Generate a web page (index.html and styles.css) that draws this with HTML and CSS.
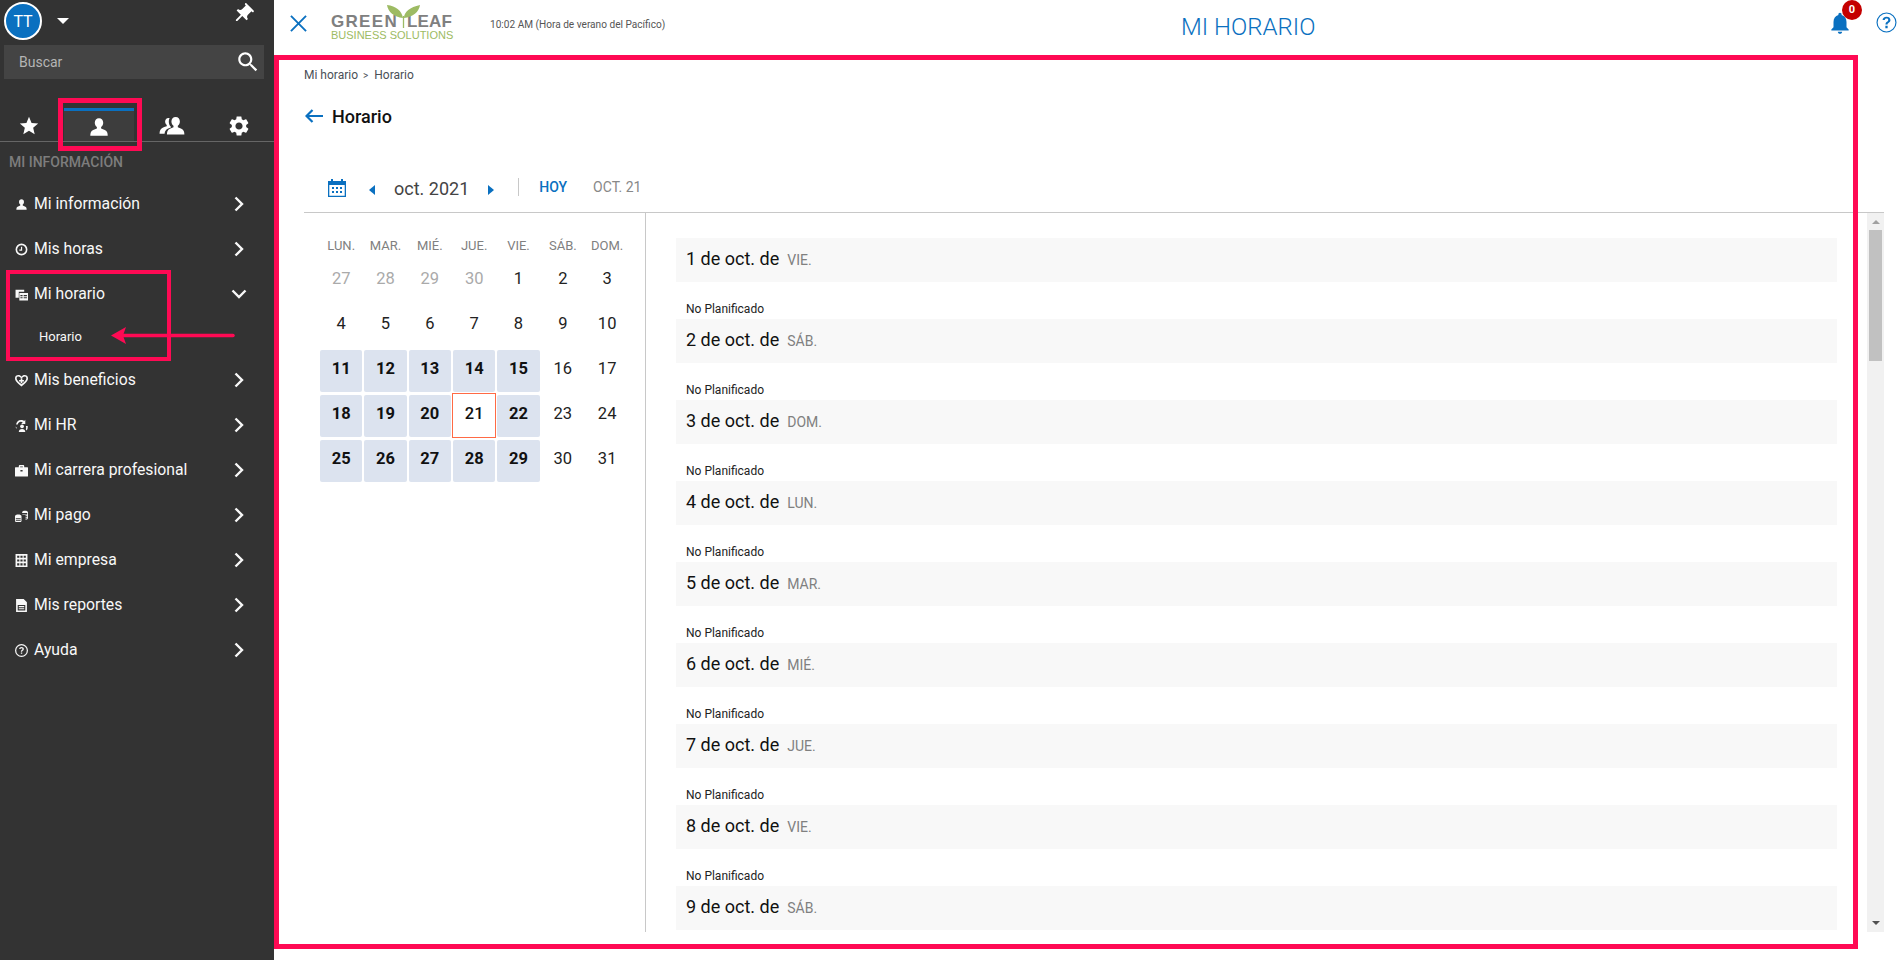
FILE: index.html
```html
<!DOCTYPE html>
<html lang="es">
<head>
<meta charset="utf-8">
<title>Mi horario</title>
<link rel="stylesheet" href="styles.css">
</head>
<body>
<svg class="defs" aria-hidden="true">
  <symbol id="i-star" viewBox="0 0 24 24"><path d="M12 17.27L18.18 21l-1.64-7.03L22 9.24l-7.19-.61L12 2 9.19 8.63 2 9.24l5.46 4.73L5.82 21z"/></symbol>
  <symbol id="i-person" viewBox="0 0 24 24"><path d="M12 2.5c-2.8 0-4.6 2-4.6 4.8 0 2 .9 3.8 2.3 4.8v1.600c-2.600.9-6 2-6.700 4.300-.3 1-.5 2.200-.5 3.500h19c0-1.300-.2-2.500-.5-3.500-.7-2.300-4.100-3.400-6.700-4.300v-1.600c1.400-1 2.300-2.800 2.300-4.800 0-2.800-1.800-4.800-4.600-4.800z"/></symbol>
  <symbol id="i-people" viewBox="0 0 30 24"><path d="M10.500 3C8.300 3 6.800 4.700 6.800 7c0 1.600.7 3.100 1.800 3.900v1.400C6 13.200 2.800 14 1.600 16.200.9 17.500.6 19 .6 20.500h5.600c.2-2.900 1.800-4.500 4-5.600 1-.5 2.100-1 3-1.300V12.800c-1.500-1.500-2.400-3.700-2.300-5.900 0-1.300.3-2.600.9-3.700-.4-.1-.9-.2-1.300-.2z"/><path d="M18.500 2c-2.900 0-4.700 2.100-4.700 4.900 0 2.100.9 3.900 2.300 4.900v1.700c-2.600.9-5.800 1.900-6.700 4.200-.4 1.100-.6 2.300-.6 3.800h19.400c0-1.500-.2-2.700-.6-3.800-.9-2.300-4.100-3.300-6.700-4.200v-1.700c1.400-1 2.300-2.800 2.300-4.900C23.200 4.100 21.400 2 18.500 2z"/></symbol>
  <symbol id="i-gear" viewBox="0 0 24 24"><path d="M19.140 12.940c.04-.3.06-.61.06-.94 0-.32-.02-.64-.07-.94l2.030-1.580c.18-.14.23-.41.12-.61l-1.920-3.320c-.12-.22-.37-.29-.59-.22l-2.390.96c-.5-.38-1.030-.7-1.620-.94l-.36-2.540c-.04-.24-.24-.41-.48-.41h-3.840c-.24 0-.43.17-.47.41l-.36 2.540c-.59.24-1.130.57-1.620.94l-2.390-.96c-.22-.08-.47 0-.59.22L2.740 8.870c-.12.21-.08.47.12.61l2.030 1.580c-.05.3-.09.63-.09.94s.02.64.07.94l-2.030 1.580c-.18.14-.23.41-.12.61l1.920 3.320c.12.22.37.29.59.22l2.390-.96c.5.38 1.030.7 1.620.94l.36 2.540c.05.24.24.41.48.41h3.840c.24 0 .44-.17.47-.41l.36-2.540c.59-.24 1.130-.56 1.620-.94l2.390.96c.22.08.47 0 .59-.22l1.920-3.320c.12-.22.07-.47-.12-.61l-2.010-1.580zM12 15.600c-1.980 0-3.600-1.620-3.600-3.600s1.620-3.600 3.600-3.600 3.600 1.620 3.600 3.600-1.620 3.600-3.600 3.600z"/></symbol>
  <symbol id="i-search" viewBox="0 0 24 24"><path d="M15.500 14h-.79l-.28-.27C15.410 12.590 16 11.110 16 9.500 16 5.910 13.090 3 9.500 3S3 5.910 3 9.500 5.910 16 9.500 16c1.610 0 3.090-.59 4.230-1.570l.27.28v.79l5 4.990L20.490 19l-4.990-5zm-6 0C7.010 14 5 11.990 5 9.500S7.010 5 9.500 5 14 7.010 14 9.500 11.990 14 9.500 14z"/></symbol>
  <symbol id="i-pin" viewBox="0 0 24 24"><path transform="rotate(45 12 12)" d="M16 9V4h1c.55 0 1-.45 1-1s-.45-1-1-1H7c-.55 0-1 .45-1 1s.45 1 1 1h1v5c0 1.660-1.340 3-3 3v2h5.970v7l1 1 1-1v-7H19v-2c-1.660 0-3-1.340-3-3z"/></symbol>
  <symbol id="i-bell" viewBox="0 0 24 24"><path d="M12 22c1.100 0 2-.9 2-2h-4c0 1.100.89 2 2 2zm6-6v-5c0-3.070-1.640-5.640-4.500-6.320V4c0-.83-.67-1.500-1.500-1.500s-1.500.67-1.500 1.500v.68C7.630 5.360 6 7.920 6 11v5l-2 2v1h16v-1l-2-2z"/></symbol>
  <symbol id="i-clock" viewBox="0 0 24 24"><path d="M12 1a11 11 0 1 0 0 22 11 11 0 0 0 0-22zm0 3a8 8 0 1 1 0 16 8 8 0 0 1 0-16z"/><path d="M11 7h2.200v7.200H8v-2.200h3z"/></symbol>
  <symbol id="i-sched" viewBox="0 0 24 24"><path d="M1 3h16v4H7v11H1z"/><path d="M8 9h16v14H8zm2 4v2h4v-2zm6 0v2h6v-2zm-6 4v2h4v-2zm6 0v2h6v-2z" fill-rule="evenodd"/></symbol>
  <symbol id="i-heart" viewBox="0 0 24 24"><path fill-rule="evenodd" d="M12 23C6 18 0 14 0 8 0 4 3 2 6.200 2 8.700 2 10.800 3.200 12 5.200 13.200 3.200 15.300 2 17.800 2 21 2 24 4 24 8c0 6-6 10-12 15zm0-4c4.600-3.800 9-7 9-11 0-2.200-1.500-3.200-3.200-3.200-2 0-3.800 1.400-5.800 4-2-2.600-3.800-4-5.800-4C4.500 4.800 3 5.800 3 8c0 4 4.400 7.200 9 11zM10.500 8h3v3h3v3h-3v3h-3v-3h-3v-3h3z"/></symbol>
  <symbol id="i-hr" viewBox="0 0 24 24"><path d="M2 10a9.500 9.500 0 0 1 15-6.500L19 1.500V9h-7.500l2.800-2.800A6 6 0 0 0 5 10z"/><circle cx="13" cy="13.500" r="3.500"/><path d="M7 24c0-3.500 2.500-5.500 6-5.500s6 2 6 5.500zM20 13h3.500v2a9 9 0 0 1-2 6l-1.500-2.200a7 7 0 0 0 0-5.800zM1 14l3 3h-2z"/></symbol>
  <symbol id="i-case" viewBox="0 0 24 24"><path fill-rule="evenodd" d="M7 6V3.500C7 2.700 7.700 2 8.500 2h7c.8 0 1.500.7 1.500 1.500V6h6c.6 0 1 .4 1 1v15c0 .6-.4 1-1 1H1c-.6 0-1-.4-1-1V7c0-.6.4-1 1-1zm2.500 0h5V4.500h-5zM10 11v3h4v-3z"/></symbol>
  <symbol id="i-pay" viewBox="0 0 24 24"><path fill-rule="evenodd" d="M13 6c0-1.800 2.400-3 5.500-3S24 4.200 24 6v11c0 1.400-1.800 2.500-4.500 2.800V17.500h3V16h-3v-1.500h3V13h-3v-1.500h3V10h-9V9h9V7.500h-9zM0 13c0-1.800 2.800-3 6-3s6 1.200 6 3v9c0 1.800-2.800 3-6 3s-6-1.200-6-3zm1.500 3.500V18h9v-1.500zm0 3.500v1.500h9V20z"/></symbol>
  <symbol id="i-company" viewBox="0 0 24 24"><path fill-rule="evenodd" d="M1 0h22v24H1zm3 3v4h4V3zm6 0v4h4V3zm6 0v4h4V3zM4 10v4h4v-4zm6 0v4h4v-4zm6 0v4h4v-4zM4 17v4h4v-4zm6 0v4h4v-4zm6 0v4h4v-4z"/></symbol>
  <symbol id="i-report" viewBox="0 0 24 24"><path fill-rule="evenodd" d="M2 0h14l6 6v18H2zm3 11v10h14V11zm2 2h10v2H7zm0 4h10v2H7z"/></symbol>
  <symbol id="i-help" viewBox="0 0 24 24"><path fill-rule="evenodd" d="M12 0a12 12 0 1 0 0 24 12 12 0 0 0 0-24zm0 2.300a9.700 9.700 0 1 1 0 19.400 9.700 9.700 0 0 1 0-19.400zM10.800 15.500h2.500v2.700h-2.500zM12 5.500c-2.500 0-4.300 1.400-4.300 3.800h2.400c0-1 .7-1.600 1.900-1.600s1.900.6 1.900 1.500c0 1-.7 1.400-1.500 2-1.100.8-1.600 1.500-1.600 3h2.300c0-.9.400-1.300 1.200-1.900 1.100-.8 2-1.600 2-3.200 0-2.300-1.900-3.600-4.300-3.600z"/></symbol>
  <symbol id="i-help-top" viewBox="0 0 24 24"><circle cx="12" cy="12" r="10.800" fill="none" stroke="currentColor" stroke-width="1.300"/><path fill-rule="evenodd" d="M10.700 15.800h2.600v2.700h-2.600zM12 5.300c-2.600 0-4.500 1.500-4.500 3.900h2.500c0-1 .8-1.700 2-1.700s2 .6 2 1.600c0 1-.7 1.400-1.500 2-1.200.8-1.700 1.600-1.700 3.300h2.400c0-1 .4-1.400 1.300-2.100 1.100-.8 2-1.700 2-3.300 0-2.300-2-3.700-4.500-3.700z"/></symbol>
  <symbol id="i-chev" viewBox="0 0 10 16"><path d="M1.500 1.500L8 8l-6.500 6.500" fill="none" stroke="currentColor" stroke-width="2.400"/></symbol>
  <symbol id="i-cal" viewBox="0 0 18 18"><path fill-rule="evenodd" d="M0 2h3V0h2v2h8V0h2v2h3v16H0zm1.300 4v10.700h15.400V6zM4 8h2v2H4zm4 0h2v2H8zm4 0h2v2h-2zM4 12h2v2H4zm4 0h2v2H8zm4 0h2v2h-2z"/></symbol>
</svg>

<aside class="sidebar">
  <div class="user-row">
    <div class="avatar">TT</div>
    <span class="caret"></span>
    <svg class="pin"><use href="#i-pin"/></svg>
  </div>
  <div class="search">
    <span>Buscar</span>
    <svg class="search-icon"><use href="#i-search"/></svg>
  </div>
  <div class="tabs">
    <div class="tab tab-star"><svg class="ti-star"><use href="#i-star"/></svg></div>
    <div class="tab tab-me"><svg class="ti-me"><use href="#i-person"/></svg></div>
    <div class="tab tab-team"><svg class="ti-team"><use href="#i-people"/></svg></div>
    <div class="tab tab-gear"><svg class="ti-gear"><use href="#i-gear"/></svg></div>
  </div>
  <div class="section-label">MI INFORMACIÓN</div>
  <nav class="nav">
    <a class="nav-item"><svg class="ni"><use href="#i-person"/></svg><span>Mi información</span><svg class="chev"><use href="#i-chev"/></svg></a>
    <a class="nav-item"><svg class="ni"><use href="#i-clock"/></svg><span>Mis horas</span><svg class="chev"><use href="#i-chev"/></svg></a>
    <a class="nav-item"><svg class="ni"><use href="#i-sched"/></svg><span>Mi horario</span><svg class="chev chev-open"><use href="#i-chev"/></svg></a>
    <a class="nav-sub">Horario</a>
    <a class="nav-item"><svg class="ni"><use href="#i-heart"/></svg><span>Mis beneficios</span><svg class="chev"><use href="#i-chev"/></svg></a>
    <a class="nav-item"><svg class="ni"><use href="#i-hr"/></svg><span>Mi HR</span><svg class="chev"><use href="#i-chev"/></svg></a>
    <a class="nav-item"><svg class="ni"><use href="#i-case"/></svg><span>Mi carrera profesional</span><svg class="chev"><use href="#i-chev"/></svg></a>
    <a class="nav-item"><svg class="ni"><use href="#i-pay"/></svg><span>Mi pago</span><svg class="chev"><use href="#i-chev"/></svg></a>
    <a class="nav-item"><svg class="ni"><use href="#i-company"/></svg><span>Mi empresa</span><svg class="chev"><use href="#i-chev"/></svg></a>
    <a class="nav-item"><svg class="ni"><use href="#i-report"/></svg><span>Mis reportes</span><svg class="chev"><use href="#i-chev"/></svg></a>
    <a class="nav-item"><svg class="ni"><use href="#i-help"/></svg><span>Ayuda</span><svg class="chev"><use href="#i-chev"/></svg></a>
  </nav>
</aside>

<main class="main">
  <header class="topbar">
    <svg class="close" viewBox="0 0 18 18"><path d="M1 1l16 16M17 1L1 17" fill="none" stroke="currentColor" stroke-width="2"/></svg>
    <div class="logo">
      <svg class="leaf" viewBox="0 0 33 23"><path d="M16 13C15 6 9 1 0 0c1 7 7 12 16 13zM17 13c0-6 6-11 16-13-1 7-7 12-16 13z" fill="#9dbb63"/><path d="M16.500 11v12" stroke="#9dbb63" stroke-width="1.300" fill="none"/></svg>
      <div class="logo-top"><span class="logo-green">GREEN</span><span class="logo-leaf">LEAF</span></div>
      <div class="logo-bottom">BUSINESS SOLUTIONS</div>
    </div>
    <div class="clock">10:02 AM (Hora de verano del Pacífico)</div>
    <h1 class="title">MI HORARIO</h1>
    <div class="top-actions">
      <div class="bell"><svg class="bell-icon"><use href="#i-bell"/></svg><span class="badge">0</span></div>
      <svg class="help"><use href="#i-help-top"/></svg>
    </div>
  </header>

  <section class="content">
    <div class="crumbs">Mi horario<span class="sep">&gt;</span>Horario</div>
    <div class="page-head">
      <svg class="back" viewBox="0 0 18 14"><path d="M18 7H2M7.500 1L1.500 7l6 6" fill="none" stroke="currentColor" stroke-width="2.200"/></svg>
      <h2>Horario</h2>
    </div>
    <div class="cal-bar">
      <svg class="cal-icon"><use href="#i-cal"/></svg>
      <span class="tri tri-l"></span>
      <span class="month">oct. 2021</span>
      <span class="tri tri-r"></span>
      <span class="bar-sep"></span>
      <span class="today">HOY</span>
      <span class="today-date">OCT. 21</span>
    </div>
    <div class="split">
      <div class="cal-pane">
        <div class="cal-grid">
          <div class="dow">LUN.</div><div class="dow">MAR.</div><div class="dow">MIÉ.</div><div class="dow">JUE.</div><div class="dow">VIE.</div><div class="dow">SÁB.</div><div class="dow">DOM.</div>
          <div class="d muted">27</div><div class="d muted">28</div><div class="d muted">29</div><div class="d muted">30</div><div class="d">1</div><div class="d">2</div><div class="d">3</div>
          <div class="d">4</div><div class="d">5</div><div class="d">6</div><div class="d">7</div><div class="d">8</div><div class="d">9</div><div class="d">10</div>
          <div class="d on">11</div><div class="d on">12</div><div class="d on">13</div><div class="d on">14</div><div class="d on">15</div><div class="d">16</div><div class="d">17</div>
          <div class="d on">18</div><div class="d on">19</div><div class="d on">20</div><div class="d now">21</div><div class="d on">22</div><div class="d">23</div><div class="d">24</div>
          <div class="d on">25</div><div class="d on">26</div><div class="d on">27</div><div class="d on">28</div><div class="d on">29</div><div class="d">30</div><div class="d">31</div>
        </div>
      </div>
      <div class="list">
        <div class="day"><div class="row"><b>1 de oct. de</b><em>VIE.</em></div></div>
        <div class="day"><div class="status">No Planificado</div><div class="row"><b>2 de oct. de</b><em>SÁB.</em></div></div>
        <div class="day"><div class="status">No Planificado</div><div class="row"><b>3 de oct. de</b><em>DOM.</em></div></div>
        <div class="day"><div class="status">No Planificado</div><div class="row"><b>4 de oct. de</b><em>LUN.</em></div></div>
        <div class="day"><div class="status">No Planificado</div><div class="row"><b>5 de oct. de</b><em>MAR.</em></div></div>
        <div class="day"><div class="status">No Planificado</div><div class="row"><b>6 de oct. de</b><em>MIÉ.</em></div></div>
        <div class="day"><div class="status">No Planificado</div><div class="row"><b>7 de oct. de</b><em>JUE.</em></div></div>
        <div class="day"><div class="status">No Planificado</div><div class="row"><b>8 de oct. de</b><em>VIE.</em></div></div>
        <div class="day"><div class="status">No Planificado</div><div class="row"><b>9 de oct. de</b><em>SÁB.</em></div></div>
      </div>
      <div class="scrollbar">
        <span class="sb-up"></span>
        <div class="sb-track"><div class="sb-thumb"></div></div>
        <span class="sb-down"></span>
      </div>
    </div>
  </section>
</main>

<div class="mark mark-tab"></div>
<div class="mark mark-menu"></div>
<div class="mark mark-content"></div>
<svg class="mark-arrow" viewBox="0 0 124 20"><path d="M122 9.500H10" fill="none" stroke="#ff0a54" stroke-width="3.500" stroke-linecap="round"/><path d="M0 9.500L15 1l-3 8.500 3 8.500z" fill="#ff0a54"/></svg>
</body>
</html>
```
FILE: styles.css
```css
* { box-sizing: border-box; }
html, body { margin: 0; height: 100%; }
body {
  display: flex;
  width: 1903px;
  height: 960px;
  overflow: hidden;
  background: #fff;
  font-family: Roboto, "Liberation Sans", sans-serif;
  color: #222;
}
.defs { display: none; }
svg { fill: currentColor; display: block; }

/* sidebar */
.sidebar { width: 274px; flex: none; background: #333; color: #fff; position: relative; }
.user-row { height: 45px; display: flex; align-items: flex-start; padding: 2px 0 0 4px; }
.avatar {
  width: 38px; height: 38px; border-radius: 50%;
  background: #0a70c0; border: 2px solid #fff;
  display: flex; align-items: center; justify-content: center;
  font-size: 16px; color: #fff;
}
.caret { width: 0; height: 0; margin: 16px 0 0 15px; border: 6px solid transparent; border-top: 6px solid #fff; border-bottom: 0; }
.pin { width: 24px; height: 24px; margin-left: auto; margin-right: 19px; }
.search {
  margin: 0 10px 0 4px; height: 34px; background: #444;
  display: flex; align-items: center; justify-content: space-between;
  padding: 0 3px 0 15px; font-size: 14px; color: #b5b5b5;
}
.search-icon { width: 26px; height: 26px; color: #fff; }
.tabs { height: 63px; position: relative; border-bottom: 1px solid #666; display: flex; align-items: flex-end; }
.tab { display: flex; align-items: center; justify-content: center; height: 33px; }
.tab-star { width: 64px; padding: 2px 6px 0 0; }
.tab-me { width: 70px; background: #3d3d3d; border-top: 3px solid #0a70c0; padding-top: 1px; }
.tab-team { width: 76px; padding-top: 2px; }
.tab-gear { width: 58px; padding-top: 2px; }
.ti-star { width: 22px; height: 22px; }
.ti-me { width: 22px; height: 22px; }
.ti-team { width: 27px; height: 22px; }
.ti-gear { width: 24px; height: 24px; }
.section-label { padding: 12px 0 0 9px; font-size: 14px; line-height: 16px; color: #7d7d7d; font-weight: 500; }
.nav { padding-top: 11px; }
.nav-item { height: 45px; display: flex; align-items: center; padding-left: 15px; font-size: 15.750px; color: #f8f8f8; }
.ni { width: 13px; height: 13px; margin-right: 6px; flex: none; margin-top: 2px; }
.chev { width: 10px; height: 16px; margin-left: auto; margin-right: 30px; flex: none; }
.chev-open { transform: rotate(90deg); }
.nav-sub { display: block; height: 41px; line-height: 42px; padding-left: 39px; font-size: 13px; color: #f8f8f8; }

/* main */
.main { flex: 1; min-width: 0; display: flex; flex-direction: column; }
.topbar { height: 55px; flex: none; position: relative; display: flex; align-items: center; padding-left: 16px; }
.close { width: 17px; height: 17px; color: #0a70c0; flex: none; margin-bottom: 9px; }
.logo { width: 122px; margin-left: 24px; flex: none; position: relative; padding-top: 13px; height: 47px; margin-bottom: 8px; }
.leaf { position: absolute; left: 56px; top: 5px; width: 33px; height: 23px; }
.logo-top { font-family: "Liberation Sans", sans-serif; font-weight: 700; font-size: 17px; line-height: 17px; color: #7f8080; display: flex; }
.logo-green { letter-spacing: 1.300px; width: 76px; }
.logo-leaf { letter-spacing: .2px; }
.logo-bottom { font-family: "Liberation Sans", sans-serif; font-size: 11px; line-height: 11px; color: #9dbb63; white-space: nowrap; }
.clock { margin-left: 37px; font-size: 10.100px; color: #555; margin-bottom: 7px; white-space: nowrap; }
.title {
  position: absolute; left: 907px; top: 14px; width: 134px; margin: 0;
  font-size: 24px; line-height: 27px; font-weight: 300; color: #0a70c0; white-space: nowrap; text-align: center;
}
.top-actions { position: absolute; top: 0; right: 0; }
.bell { position: absolute; left: -76px; top: 10px; width: 24px; height: 28px; }
.bell-icon { width: 26px; height: 26px; color: #0a70c0; }
.badge {
  position: absolute; left: 15px; top: -10px; width: 20px; height: 20px; border-radius: 50%;
  background: #c40000; color: #fff; font-size: 11px; font-weight: 700; line-height: 20px; text-align: center;
}
.help { position: absolute; left: -27px; top: 12px; width: 21px; height: 21px; color: #0a70c0; }

.content { flex: 1; min-height: 0; padding: 11px 19px 0 30px; display: flex; flex-direction: column; }
.crumbs { height: 18px; flex: none; font-size: 12px; line-height: 18px; color: #4a4f57; }
.sep { margin: 0 6px 0 5px; font-size: 10px; }
.page-head { display: flex; align-items: center; height: 26px; margin-top: 19px; }
.back { width: 18px; height: 14px; color: #0a70c0; margin-left: 1px; }
.page-head h2 { margin: 0 0 0 9px; font-size: 18px; font-weight: 500; color: #111; }
.cal-bar { display: flex; align-items: center; height: 34px; margin-top: 41px; position: relative; padding-left: 24px; }
.cal-icon { width: 18px; height: 18px; color: #0a70c0; margin-top: 2px; }
.tri { width: 0; height: 0; border-top: 5px solid transparent; border-bottom: 5px solid transparent; }
.tri-l { border-right: 6px solid #0a70c0; margin: 5px 0 0 23px; }
.tri-r { border-left: 6px solid #0a70c0; margin: 5px 0 0 19px; }
.month { font-size: 18px; margin-left: 19px; color: #444; margin-top: 2px; }
.bar-sep { width: 1px; height: 18px; background: #c8c8c8; margin-left: 24px; }
.today { font-size: 14px; font-weight: 500; color: #0a70c0; margin-left: 20px; }
.today-date { font-size: 14px; color: #888; margin-left: 26px; }

.split { height: 720px; display: flex; border-top: 1px solid #c8c8c8; margin-top: 8px; }
.cal-pane { width: 342px; flex: none; border-right: 1px solid #c8c8c8; padding: 20px 0 0 15px; }
.cal-grid { display: grid; grid-template-columns: repeat(7, 44.330px); grid-template-rows: 25px repeat(5, 45px); }
.dow { font-size: 13px; color: #808080; text-align: center; align-self: center; }
.d { display: flex; align-items: center; justify-content: center; font-size: 16.500px; margin: 1.500px 1px; padding-bottom: 5px; color: #222; border-radius: 2px; }
.muted { color: #aaa; }
.on { background: #dce3ef; font-weight: 700; color: #111; }
.now { margin: 0; border: 1px solid #ff6a45; border-radius: 0; font-weight: 500; color: #111; }

.list { width: 1221px; flex: none; overflow: hidden; padding: 0 0 0 30px; }
.day { width: 1161px; height: 81px; display: flex; flex-direction: column; justify-content: flex-end; }
.day:first-child { height: 69px; }
.status { font-size: 12px; line-height: 15px; padding-left: 10px; color: #222; margin-bottom: 2px; }
.row { height: 44px; flex: none; background: #f8f8f8; display: flex; align-items: center; padding: 0 0 3px 10px; }
.row b { font-weight: 400; font-size: 18px; color: #111; }
.row em { font-style: normal; font-size: 14px; color: #808080; margin-left: 8px; margin-top: 3px; }

.scrollbar { width: 17px; flex: none; background: #f1f1f1; display: flex; flex-direction: column; align-items: center; }
.sb-up { width: 0; height: 0; margin: 7px 0 5px; border: 4px solid transparent; border-top: 0; border-bottom: 4px solid #a0a0a0; }
.sb-track { flex: 1; width: 100%; padding: 1px 2px 0; }
.sb-thumb { height: 131px; background: #c1c1c1; }
.sb-down { width: 0; height: 0; margin: 5px 0 7px; border: 4px solid transparent; border-bottom: 0; border-top: 4px solid #505050; }

/* annotation overlays */
.mark { position: absolute; border: 5px solid #ff0a54; pointer-events: none; }
.mark-tab { left: 58px; top: 98px; width: 84px; height: 53px; }
.mark-menu { left: 6px; top: 270px; width: 165px; height: 91px; border-width: 4px; }
.mark-content { left: 274px; top: 55px; width: 1584px; height: 894px; }
.mark-arrow { position: absolute; left: 111px; top: 326px; width: 124px; height: 20px; }
```
